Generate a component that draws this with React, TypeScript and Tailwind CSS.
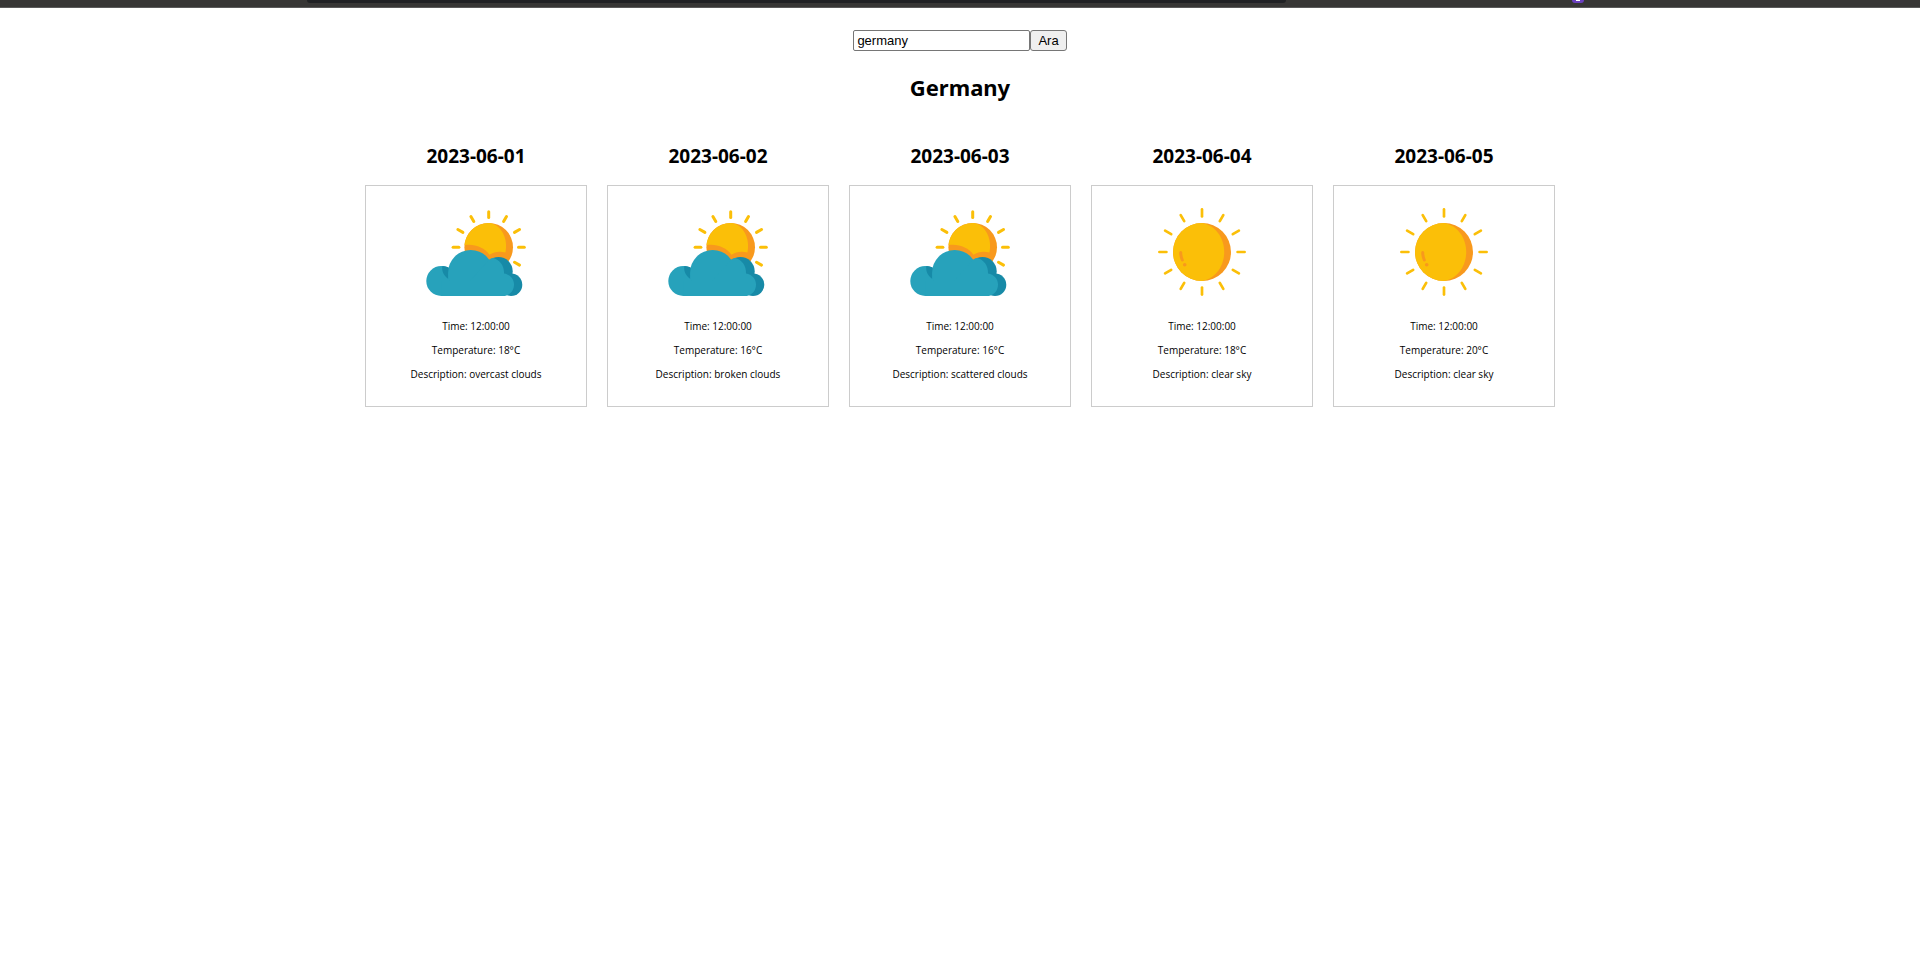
import { useState, type FormEvent } from 'react'

type Sky = 'cloudy' | 'clear'

interface Forecast {
  date: string
  time: string
  temperature: number
  description: string
  sky: Sky
}

const forecasts: Forecast[] = [
  { date: '2023-06-01', time: '12:00:00', temperature: 18, description: 'overcast clouds', sky: 'cloudy' },
  { date: '2023-06-02', time: '12:00:00', temperature: 16, description: 'broken clouds', sky: 'cloudy' },
  { date: '2023-06-03', time: '12:00:00', temperature: 16, description: 'scattered clouds', sky: 'cloudy' },
  { date: '2023-06-04', time: '12:00:00', temperature: 18, description: 'clear sky', sky: 'clear' },
  { date: '2023-06-05', time: '12:00:00', temperature: 20, description: 'clear sky', sky: 'clear' },
]

const clearRays = [0, 30, 60, 90, 120, 150, 180, 210, 240, 270, 300, 330]
const cloudyRays = [270, 300, 330, 0, 30, 60, 90, 120]

function ClearIcon() {
  return (
    <svg viewBox="0 0 100 100" className="size-[100px]" aria-hidden="true">
      <g stroke="#fbbf08" strokeWidth="2.7" strokeLinecap="round">
        {clearRays.map((angle) => (
          <line key={angle} x1="50" y1="7.4" x2="50" y2="14.4" transform={`rotate(${angle} 50 50)`} />
        ))}
      </g>
      <circle cx="50" cy="50" r="29" fill="#f8991d" />
      <path d="M50 21A29 29 0 0 0 50 79C62.5 77 72.2 65 72.2 50S62.5 23 50 21Z" fill="#fbbf08" />
      <path d="M28.7 50.5Q28.7 54.5 30.3 58" fill="none" stroke="#f8991d" strokeWidth="3" strokeLinecap="round" />
      <circle cx="32.7" cy="62.7" r="1.8" fill="#f8991d" />
    </svg>
  )
}

function CloudyIcon() {
  return (
    <svg viewBox="0 0 100 100" className="size-[100px]" aria-hidden="true">
      <g stroke="#fbbf08" strokeWidth="3" strokeLinecap="round">
        {cloudyRays.map((angle) => (
          <line key={angle} x1="62.7" y1="9.7" x2="62.7" y2="15.5" transform={`rotate(${angle} 62.7 45.3)`} />
        ))}
      </g>
      <circle cx="62.7" cy="45.3" r="24.3" fill="#f8991d" />
      <path
        d="M62.7 21A24.3 24.3 0 0 0 38.5 43.2C48 41.5 58.5 45.5 63.5 52.8C68 49.6 74.5 48.9 79.4 50.6C82.5 38 76 22 62.7 21Z"
        fill="#fbbf08"
      />
      <g fill="#178aa7">
        <circle cx="72.5" cy="69.3" r="14.2" />
        <circle cx="85" cy="82.7" r="11.3" />
      </g>
      <g fill="#27a2bb">
        <circle cx="15.3" cy="79" r="15" />
        <circle cx="44.7" cy="70.7" r="22.7" />
        <path d="M62 59C63.5 57 65.5 56 67 55.9C74 57.5 78.5 64 78 71.6C84 72.5 88 77 88 82.5C88 88.5 84.5 92.5 79 94H15.3V79H44Z" />
      </g>
      <path d="M16.3 64Q19.5 63.9 22.7 65.6Q21.8 70.5 22.1 76.7C17.5 73.3 15.6 69 16.3 64Z" fill="#178aa7" />
    </svg>
  )
}

function ForecastCard({ forecast }: { forecast: Forecast }) {
  return (
    <section className="flex flex-col items-center">
      <h3 className="text-[19px] leading-[26px] font-bold">{forecast.date}</h3>
      <div className="mt-4 flex size-[222px] flex-col items-center border border-[#cccccc] pt-4">
        {forecast.sky === 'clear' ? <ClearIcon /> : <CloudyIcon />}
        <div className="mt-[17px] flex flex-col gap-[10px] text-center font-['Open_Sans','Noto_Sans',sans-serif] text-[10px] leading-[14px]">
          <p>Time: {forecast.time}</p>
          <p>Temperature: {forecast.temperature}°C</p>
          <p>Description: {forecast.description}</p>
        </div>
      </div>
    </section>
  )
}

export default function App() {
  const [query, setQuery] = useState('germany')
  const submit = (event: FormEvent) => event.preventDefault()

  return (
    <div className="min-h-screen bg-white font-['Noto_Sans','Open_Sans',sans-serif] text-black">
      <div className="flex h-2 items-start border-b border-[#5a5a5a] bg-[#373635]">
        <div className="w-[16%]" />
        <div className="h-[3px] w-[51%] rounded-b-sm bg-[#202124]" />
        <div className="w-[14.9%]" />
        <div className="flex h-[3px] w-3 justify-center rounded-b-sm bg-[#6b3fc0]">
          <div className="h-px w-1 bg-white" />
        </div>
      </div>
      <main className="flex flex-col items-center pt-[22px]">
        <form onSubmit={submit} className="flex font-['Liberation_Sans',Arial,sans-serif] text-[13px] leading-[15px]">
          <input
            type="text"
            aria-label="Country"
            value={query}
            onChange={(event) => setQuery(event.target.value)}
            className="h-[21px] w-[177px] rounded-xs border border-[#767676] bg-white px-[3px]"
          />
          <button type="submit" className="h-[21px] rounded-[3px] border border-[#767676] bg-[#efefef] px-[7px]">
            Ara
          </button>
        </form>
        <h2 className="mt-5 text-[22px] leading-8 font-bold">Germany</h2>
        <div className="mt-10 flex flex-wrap justify-center gap-5">
          {forecasts.map((forecast) => (
            <ForecastCard key={forecast.date} forecast={forecast} />
          ))}
        </div>
      </main>
    </div>
  )
}
